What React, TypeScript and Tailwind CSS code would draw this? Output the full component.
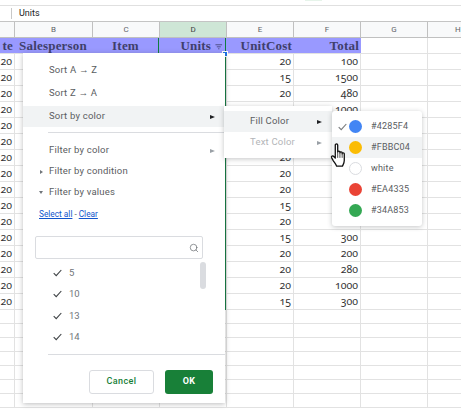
import { Search } from "lucide-react";

const serif = "[font-family:'Liberation_Serif',serif]";
const roboto = "[font-family:Roboto,sans-serif]";

// [total, unit cost]; blanks sit under the open menus
const rows = [
  ["100", "20"], ["1500", "15"], ["480", "20"], ["1000", ""], ["", ""], ["", ""],
  ["", "20"], ["", "20"], ["", "20"], ["", "15"], ["", "20"], ["300", "15"],
  ["200", "20"], ["280", "20"], ["1000", "20"], ["300", "15"],
];

const colWidths = "grid grid-cols-[15px_78px_67px_67px_67px_67px_67px_1fr]";

const HeaderCell = ({ label, active }: { label: string; active?: boolean }) => (
  <div className={`flex items-center justify-center border-r border-[#c0c0c0] text-[8px] ${active ? "bg-[#cee6d6] text-[#3c4043]" : "text-[#5f6368]"}`}>
    {label}
  </div>
);

const Cell = ({ text }: { text?: string }) => (
  <div className="flex items-center justify-end overflow-hidden border-r border-b border-[#e2e2e2] pr-[2px] text-[10.5px] text-[#333] [font-family:'Noto_Sans',sans-serif] [font-variant-numeric:oldstyle-nums]">
    {text}
  </div>
);

const HeadCell = ({ text, align = "justify-end", children }: { text: string; align?: string; children?: React.ReactNode }) => (
  <div className={`flex items-center ${align} overflow-hidden whitespace-nowrap bg-[#9999ff] pr-[2px] text-[13px] font-bold tracking-[0.2px] text-[#3f3f6b] ${serif}`}>
    {text}
    {children}
  </div>
);

const MenuRow = ({ label, hover, arrow, caret, muted }: { label: string; hover?: boolean; arrow?: boolean; caret?: "right" | "down"; muted?: boolean }) => (
  <div className={`relative flex h-[21px] items-center pl-[26px] pr-[10px] text-[9.5px] tracking-[0.2px] text-[#5a5d61] ${hover ? "bg-[#f1f3f4]" : ""}`}>
    {caret === "right" && <span className="absolute left-[17px] h-0 w-0 border-y-[2.5px] border-l-[3px] border-y-transparent border-l-[#70757a]" />}
    {caret === "down" && <span className="absolute left-[16px] h-0 w-0 border-x-[2.5px] border-t-[3px] border-x-transparent border-t-[#70757a]" />}
    <span className="flex-1">{label}</span>
    {arrow && <span className={`h-0 w-0 border-y-[2.5px] border-l-[5px] border-y-transparent ${muted ? "border-l-[#9aa0a6]" : "border-l-[#202124]"}`} />}
  </div>
);

const Check = ({ className = "" }: { className?: string }) => (
  <svg width="9" height="8" viewBox="0 0 9 8" className={className}>
    <path d="M0.7 4.2 L3.2 6.6 L8.3 1" fill="none" stroke="#3c4043" strokeWidth="1.1" />
  </svg>
);

const colors = [
  { label: "#4285F4", bg: "bg-[#4285f4]", checked: true },
  { label: "#FBBC04", bg: "bg-[#fbbc04]", hover: true },
  { label: "white", bg: "bg-white border border-[#dadce0]" },
  { label: "#EA4335", bg: "bg-[#ea4335]" },
  { label: "#34A853", bg: "bg-[#34a853]" },
];

export default function App() {
  return (
    <div className={`relative h-[414px] w-[461px] overflow-hidden bg-white ${roboto}`}>
      {/* top strip */}
      <div className="flex h-[6px] justify-start border-b border-[#e0e0e0]">
        <div className="ml-[305px] h-[1px] w-[17px] bg-[#e6f4ea]" />
      </div>
      {/* formula bar */}
      <div className="flex h-[16px] items-center border-b border-[#c4c4c4] text-[9px] text-[#202124]">
        <div className="ml-[11px] mr-[7px] h-[11px] w-px bg-[#c8c8c8]" />
        Units
      </div>
      {/* column letters */}
      <div className={`${colWidths} h-[16px] border-b border-[#c0c0c0] bg-[#f8f9fa]`}>
        <HeaderCell label="" />
        <HeaderCell label="B" />
        <HeaderCell label="C" />
        <HeaderCell label="D" active />
        <HeaderCell label="E" />
        <HeaderCell label="F" />
        <HeaderCell label="G" />
        <div className="flex items-center pl-[27px] text-[8px] text-[#5f6368]">H</div>
      </div>
      {/* header row */}
      <div className={`${colWidths} h-[16px] border-b border-[#e2e2e2]`}>
        <HeadCell text="te" />
        <HeadCell text="Salesperson" align="justify-center" />
        <HeadCell text="Item" align="justify-center" />
        <HeadCell text="Units">
          <svg width="8" height="6" viewBox="0 0 9 6" className="ml-[4px] mr-[2px] mt-[2px] shrink-0">
            <path d="M0.5 0.5H8 M2 2.8H6.5 M3.5 5H5" stroke="#3f3f6b" strokeWidth="0.9" />
          </svg>
        </HeadCell>
        <HeadCell text="UnitCost" />
        <HeadCell text="Total" />
        <div className="border-r border-[#e2e2e2]" />
        <div />
      </div>
      {/* data rows */}
      {rows.map((r, i) => (
        <div key={i} className={`${colWidths} h-[16px]`}>
          <Cell text="20" />
          <Cell />
          <Cell />
          <Cell />
          <Cell text={r[1]} />
          <Cell text={r[0]} />
          <Cell />
          <div className="border-b border-[#e2e2e2]" />
        </div>
      ))}
      {/* empty rows */}
      {Array.from({ length: 7 }).map((_, i) => (
        <div key={i} className={`${colWidths} h-[14px]`}>
          <Cell />
          <Cell />
          <Cell />
          <Cell />
          <Cell />
          <Cell />
          <Cell />
          <div className="border-b border-[#e2e2e2]" />
        </div>
      ))}

      {/* selection border on column D */}
      <div className="absolute left-[158px] top-[38px] h-[272px] w-[68px] border-x-[1.5px] border-[#107c41]" />
      <div className="absolute left-[223px] top-[52px] h-[4px] w-[4px] bg-[#1a73e8] outline outline-1 outline-white" />

      {/* filter menu */}
      <div className="absolute left-[23px] top-[53px] flex h-[350px] w-[202px] flex-col bg-white pt-[7px] shadow-[0_1px_5px_rgba(60,64,67,0.35)]">
        <div className="flex h-[21px] items-center pl-[26px] text-[9.5px] tracking-[0.2px] text-[#5a5d61]">Sort A → Z</div>
        <div className="mt-[2px] flex h-[21px] items-center pl-[26px] text-[9.5px] tracking-[0.2px] text-[#5a5d61]">Sort Z → A</div>
        <div className="mt-[2px]"><MenuRow label="Sort by color" hover arrow /></div>
        <div className="ml-[25px] mt-[5px] h-px bg-[#dadce0]" />
        <div className="mt-[7px]"><MenuRow label="Filter by color" arrow muted /></div>
        <MenuRow label="Filter by condition" caret="right" />
        <MenuRow label="Filter by values" caret="down" />
        <div className="mt-[2px] flex h-[18px] items-center pl-[16px] text-[8.3px] text-[#1155cc]">
          <span className="underline">Select all</span>
          <span className="mx-[2px] text-[#5f6368]">-</span>
          <span className="underline">Clear</span>
        </div>
        <div className="ml-[12px] mt-[13px] flex h-[23px] w-[168px] items-center justify-end rounded-[2px] border border-[#dadce0] pr-[3px]">
          <Search size={10} strokeWidth={1.6} className="text-[#5f6368]" />
        </div>
        <div className="relative mt-[3px] flex h-[92px] flex-col">
          <div className="absolute left-[177px] top-0 h-[27px] w-[6px] rounded-[3px] bg-[#dadce0]" />
          {["5", "10", "13", "14"].map((v) => (
            <div key={v} className="flex h-[21.5px] items-center pl-[30px] text-[9.5px] text-[#70757a]">
              <Check className="mr-[7px]" />
              {v}
            </div>
          ))}
        </div>
        <div className="ml-[25px] h-px bg-[#dadce0]" />
        <div className="mt-[15px] flex justify-end gap-[11px] pr-[12px]">
          <div className="flex h-[24px] w-[65px] items-center justify-center rounded-[3px] border border-[#dadce0] text-[9px] font-medium tracking-[0.4px] text-[#188038]">Cancel</div>
          <div className="flex h-[24px] w-[48px] items-center justify-center rounded-[3px] bg-[#188038] text-[9px] font-bold tracking-[0.4px] text-white">OK</div>
        </div>
      </div>

      {/* sort by color submenu */}
      <div className="absolute left-[224px] top-[106px] flex h-[52px] w-[108px] flex-col bg-white pt-[5px] shadow-[0_1px_5px_rgba(60,64,67,0.3)]">
        <div className="flex h-[21px] items-center bg-[#f1f3f4] pl-[26px] pr-[10px] text-[9.5px] tracking-[0.2px] text-[#5a5d61]">
          <span className="flex-1">Fill Color</span>
          <span className="h-0 w-0 border-y-[2.5px] border-l-[5px] border-y-transparent border-l-[#202124]" />
        </div>
        <div className="flex h-[21px] items-center pl-[26px] pr-[10px] text-[9.5px] tracking-[0.2px] text-[#b3b5b8]">
          <span className="flex-1">Text Color</span>
          <span className="h-0 w-0 border-y-[2.5px] border-l-[5px] border-y-transparent border-l-[#9aa0a6]" />
        </div>
      </div>

      {/* colour list */}
      <div className="absolute left-[332px] top-[111px] flex w-[90px] flex-col rounded-[3px] bg-white py-[5px] shadow-[0_1px_5px_rgba(60,64,67,0.3)]">
        {colors.map((c) => (
          <div key={c.label} className={`relative flex h-[21px] items-center pl-[17px] text-[9px] tracking-[0.2px] text-[#5a5d61] ${c.hover ? "bg-[#f1f3f4]" : ""}`}>
            {c.checked && <Check className="absolute left-[6px] opacity-70" />}
            <span className={`mr-[9px] h-[13px] w-[13px] rounded-full ${c.bg}`} />
            {c.label}
          </div>
        ))}
      </div>

      {/* hand cursor */}
      <svg width="18" height="26" viewBox="0 0 18 28" className="absolute left-[330px] top-[143px]">
        <path
          d="M5 2.2c0-1.6 2.6-1.6 2.6 0v7.6c0-1.5 2.4-1.5 2.4 0v.8c0-1.4 2.4-1.4 2.4 0v1c0-1.3 2.3-1.3 2.3.1v7c0 3-1.4 4.6-2 6.3H6.5c-.8-2.2-2.4-3.8-3.6-5.8L1 15.7c-.7-1.5 1.2-2.5 2.4-1.2L5 16.3z"
          fill="#fff"
          stroke="#111"
          strokeWidth="1.4"
          strokeLinejoin="round"
        />
        <path d="M7.6 10v6M10 10.6V16M12.4 11.6V16" stroke="#111" strokeWidth="0.8" />
      </svg>
    </div>
  );
}
